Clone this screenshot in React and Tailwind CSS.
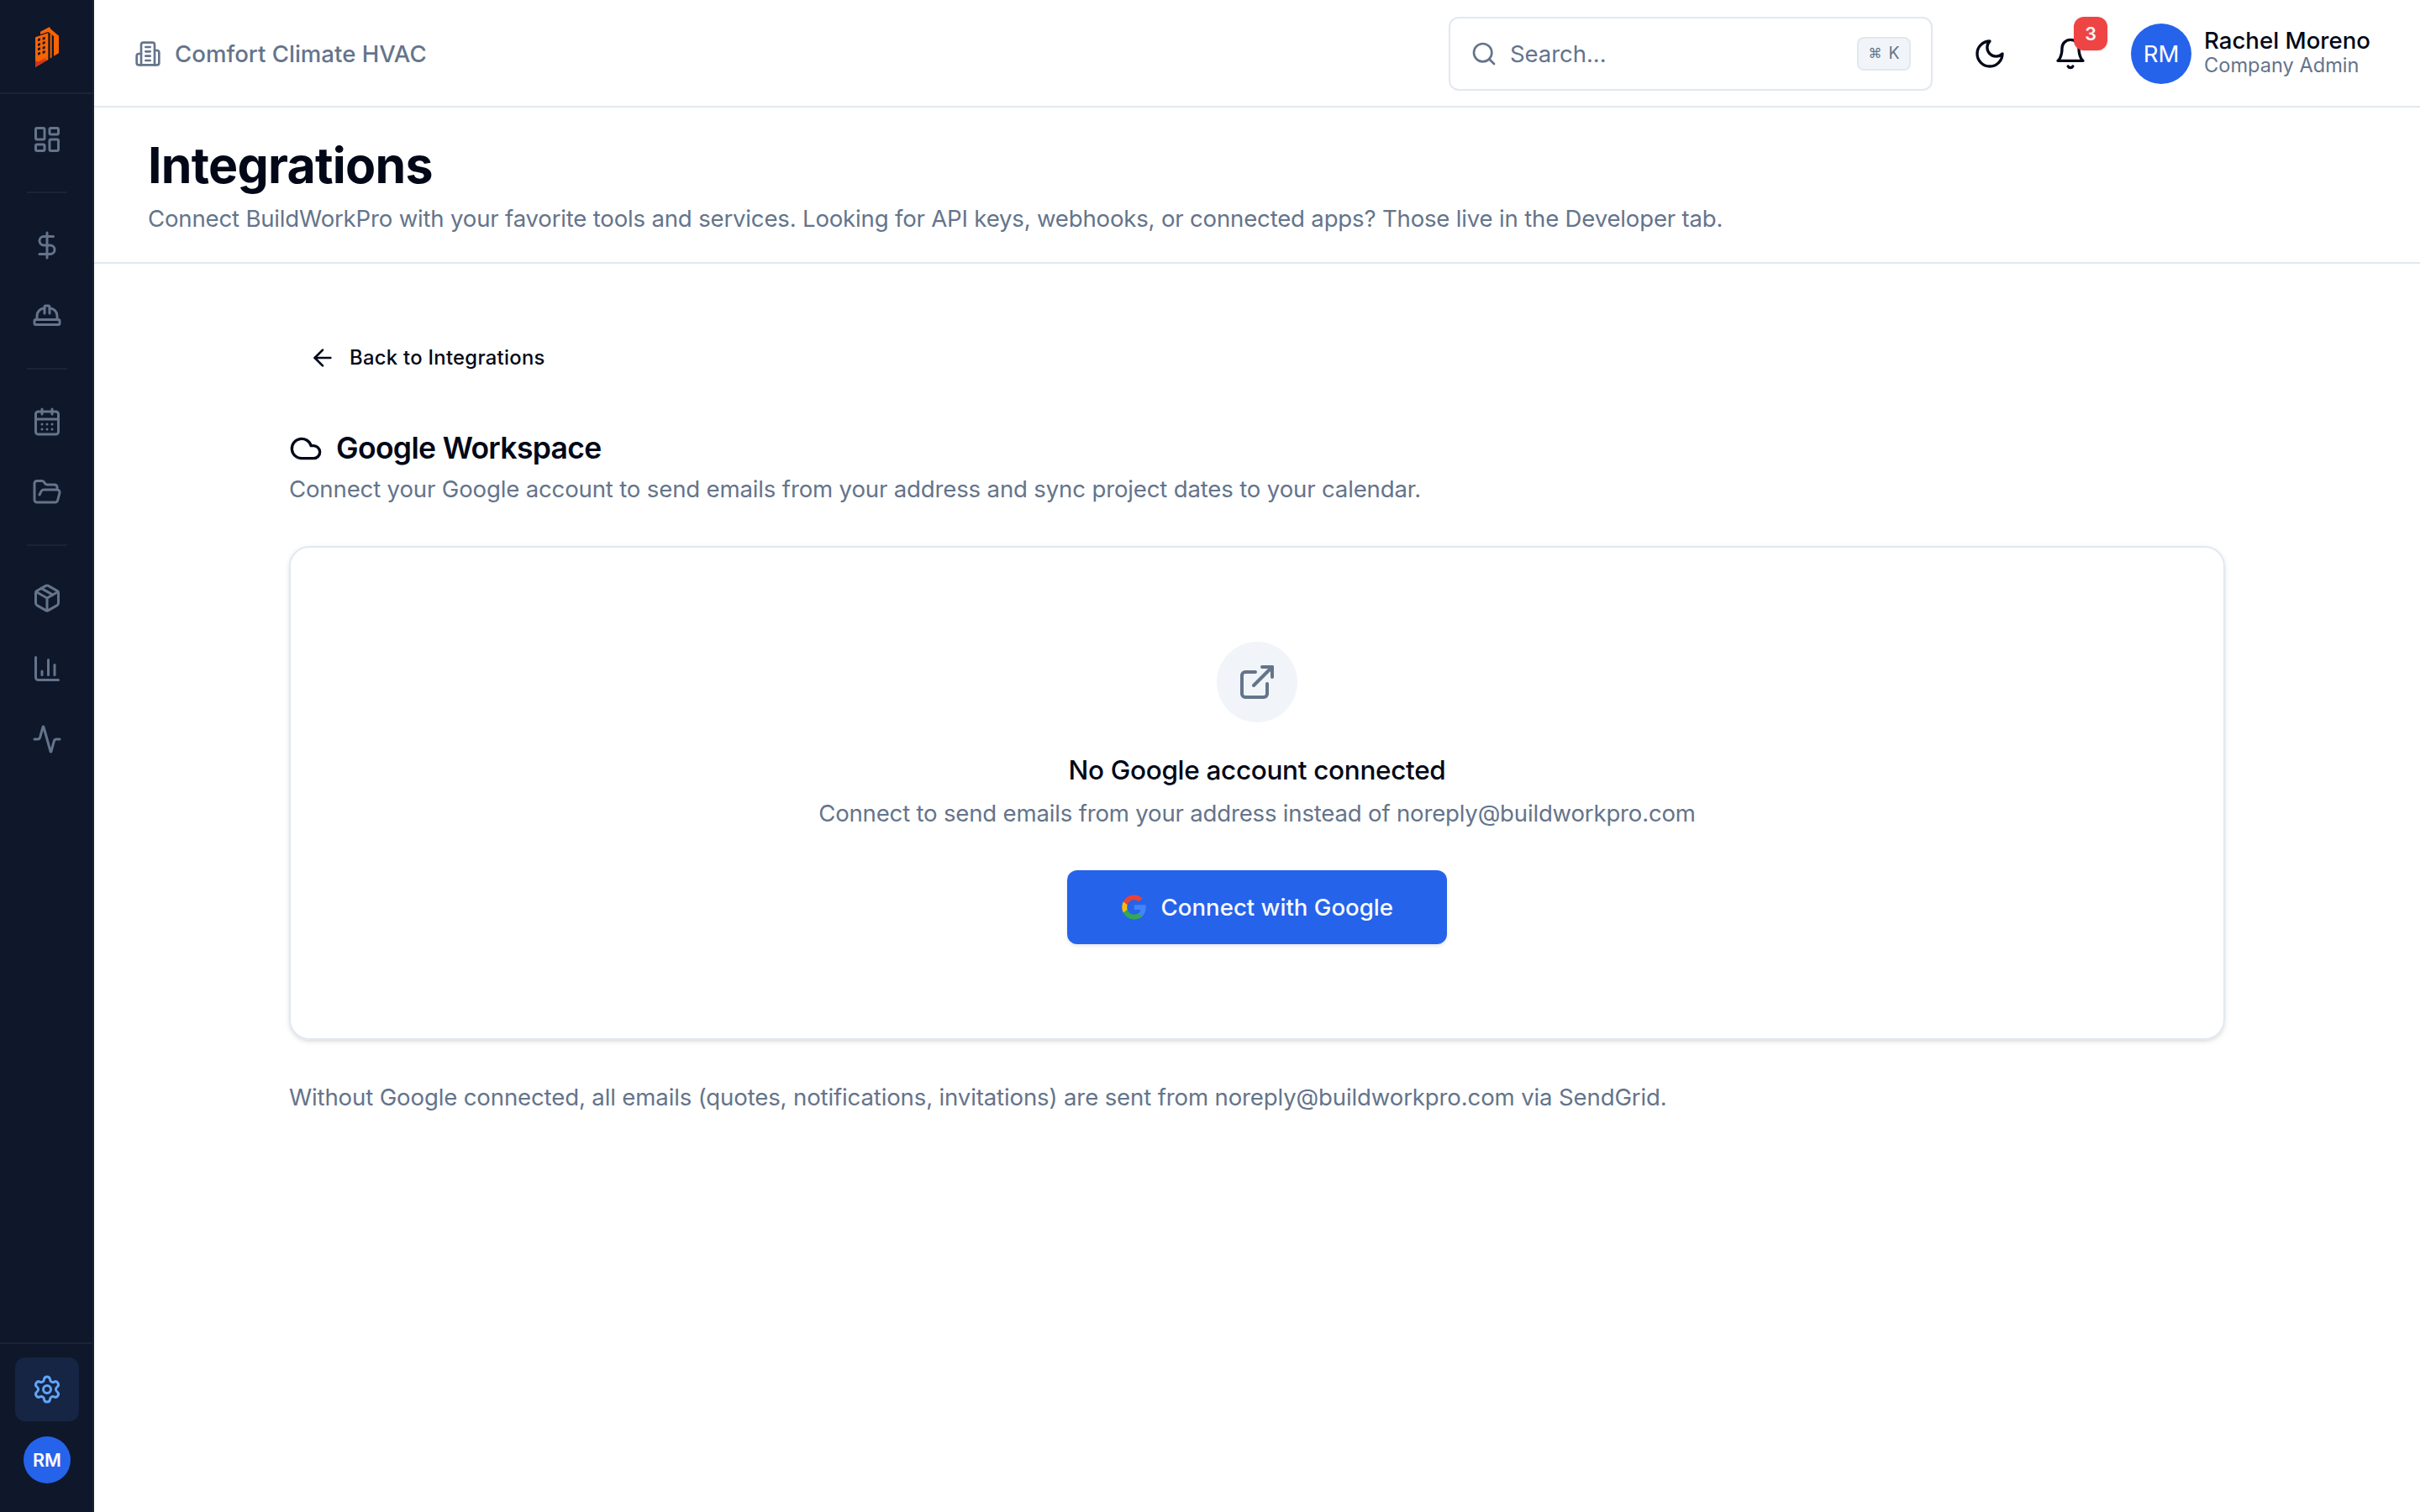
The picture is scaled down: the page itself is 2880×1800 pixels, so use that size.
import {
  Activity,
  ArrowLeft,
  CalendarDays,
  ChartColumn,
  Cloud,
  DollarSign,
  ExternalLink,
  FolderOpen,
  HardHat,
  LayoutDashboard,
  Package,
  Search,
  Settings,
} from "lucide-react";

function LineIcon({ className, children }) {
  return (
    <svg
      viewBox="0 0 24 24"
      fill="none"
      stroke="currentColor"
      strokeWidth="2"
      strokeLinecap="round"
      strokeLinejoin="round"
      className={className}
    >
      {children}
    </svg>
  );
}

function BuildingIcon({ className }) {
  return (
    <LineIcon className={className}>
      <path d="M6 22V4a2 2 0 0 1 2-2h8a2 2 0 0 1 2 2v18Z" />
      <path d="M6 12H4a2 2 0 0 0-2 2v6a2 2 0 0 0 2 2h2" />
      <path d="M18 9h2a2 2 0 0 1 2 2v9a2 2 0 0 1-2 2h-2" />
      <path d="M10 6h4" />
      <path d="M10 10h4" />
      <path d="M10 14h4" />
      <path d="M10 18h4" />
    </LineIcon>
  );
}

function MoonIcon({ className }) {
  return (
    <LineIcon className={className}>
      <path d="M12 3a6 6 0 0 0 9 9 9 9 0 1 1-9-9Z" />
    </LineIcon>
  );
}

function BellIcon({ className }) {
  return (
    <LineIcon className={className}>
      <path d="M6 8a6 6 0 0 1 12 0c0 7 3 9 3 9H3s3-2 3-9" />
      <path d="M10.3 21a1.94 1.94 0 0 0 3.4 0" />
    </LineIcon>
  );
}

function BrandMark() {
  return (
    <svg viewBox="126 96 84 144" className="h-12 w-7">
      <path
        fill="#f96302"
        d="M144 113 177 96l3 7 30 25v62l-18 10v-71l-20-15-28 9Z"
      />
      <path fill="#f96302" d="m179 120 6 4v81l-6 4Z" />
      <path
        fill="#f96302"
        fillRule="evenodd"
        d="M126 133 172 118v95l-46 27Zm9 6v9l9-3v-9Zm17-5v9l9-3v-9Zm-17 22v9l9-3v-9Zm17-6v9l9-3v-9Zm-17 22v9l9-3v-9Zm17-5v9l9-3v-9Zm-17 21v9l9-3v-9Zm17-5v9l9-3v-9Z"
      />
      <path fill="#c8371b" d="m126 217 12 4 8-7 4 4 4-12 3 10 6-11 2 12-39 23Z" />
    </svg>
  );
}

function GoogleIcon() {
  return (
    <svg viewBox="0 0 24 24" className="size-8">
      <path fill="#4285F4" d="M22.56 12.25c0-.78-.07-1.53-.2-2.25H12v4.26h5.92c-.26 1.37-1.04 2.53-2.21 3.31v2.77h3.57c2.08-1.92 3.28-4.74 3.28-8.09z" />
      <path fill="#34A853" d="M12 23c2.97 0 5.46-.98 7.28-2.66l-3.57-2.77c-.98.66-2.23 1.06-3.71 1.06-2.86 0-5.29-1.93-6.16-4.53H2.18v2.84C3.99 20.53 7.7 23 12 23z" />
      <path fill="#FBBC05" d="M5.84 14.09c-.22-.66-.35-1.36-.35-2.09s.13-1.43.35-2.09V7.07H2.18C1.43 8.55 1 10.22 1 12s.43 3.45 1.18 4.93l2.85-2.22.81-.62z" />
      <path fill="#EA4335" d="M12 5.38c1.62 0 3.06.56 4.21 1.64l3.15-3.15C17.45 2.09 14.97 1 12 1 7.7 1 3.99 3.47 2.18 7.07l3.66 2.84c.87-2.6 3.3-4.53 6.16-4.53z" />
    </svg>
  );
}

const NAV_GROUPS = [
  [LayoutDashboard],
  [DollarSign, HardHat],
  [CalendarDays, FolderOpen],
  [Package, ChartColumn, Activity],
];

function Sidebar() {
  return (
    <aside className="flex w-28 shrink-0 flex-col border-r-2 border-[#1a2435] bg-[#0f172a] text-[#64748b]">
      <div className="flex h-28 items-center justify-center border-b-2 border-[#1a2435] pl-0.5 pt-0.5">
        <BrandMark />
      </div>
      <nav className="flex flex-1 flex-col items-center pl-0.5 pt-4">
        {NAV_GROUPS.map((group, i) => (
          <div key={i} className="flex flex-col items-center">
            {i > 0 && <div className="mb-6 mt-6 h-0.5 w-12 bg-[#1a2435]" />}
            <div className="flex flex-col gap-2">
              {group.map((Icon, j) => (
                <a key={j} className="flex size-[76px] items-center justify-center">
                  <Icon className="size-9" strokeWidth={2} />
                </a>
              ))}
            </div>
          </div>
        ))}
      </nav>
      <div className="flex h-[202px] flex-col items-center border-t-2 border-[#1a2435] pl-0.5 pt-4">
        <a className="flex size-[76px] items-center justify-center rounded-xl bg-[#162544] text-[#60a5fa]">
          <Settings className="size-9" strokeWidth={2} />
        </a>
        <div className="mt-[18px] flex size-14 items-center justify-center rounded-full bg-[#2563eb] text-[21.5px] font-semibold text-white">
          RM
        </div>
      </div>
    </aside>
  );
}

function TopBar() {
  return (
    <header className="flex h-32 items-center border-b-2 border-[#e2e8f0] pl-12 pr-[60px] pt-0.5">
      <div className="flex items-center gap-4 text-[#64748b]">
        <BuildingIcon className="size-8" />
        <span className="text-[27.6px] font-medium leading-10">Comfort Climate HVAC</span>
      </div>
      <div className="ml-auto flex h-[88px] w-[576px] items-center rounded-xl border-2 border-[#e2e8f0] px-6 text-[#64748b]">
        <Search className="size-8" />
        <span className="ml-[15px] text-[27.6px] leading-10 tracking-[-0.1px]">Search...</span>
        <kbd className="ml-auto flex h-10 w-16 items-center justify-center gap-2 rounded-lg border-2 border-[#e2e8f0] bg-[#f1f5f9] font-[Inter] text-[19.5px] leading-none">
          <span className="font-['DejaVu_Sans'] text-base leading-none">⌘</span>K
        </kbd>
      </div>
      <button className="ml-7 flex size-20 items-center justify-center">
        <MoonIcon className="size-10" />
      </button>
      <button className="relative ml-4 flex size-20 items-center justify-center">
        <BellIcon className="size-10" />
        <span className="absolute -right-1 -top-1 flex size-10 items-center justify-center rounded-xl bg-[#ef4444] text-[21.5px] font-semibold text-[#f8fafc] shadow-sm">
          3
        </span>
      </button>
      <div className="ml-8 flex size-[72px] items-center justify-center rounded-full bg-[#2563eb] text-[27.6px] leading-10 text-white">
        RM
      </div>
      <div className="ml-[15px] flex w-[197px] flex-col whitespace-nowrap">
        <span className="text-[27.6px] font-medium leading-7">Rachel Moreno</span>
        <span className="text-[23.6px] leading-8 text-[#64748b]">Company Admin</span>
      </div>
    </header>
  );
}

export default function App() {
  return (
    <div className="flex h-[1800px] w-[2880px] overflow-hidden bg-white font-[Inter,sans-serif] text-[#020817]">
      <Sidebar />
      <div className="flex flex-1 flex-col">
        <TopBar />
        <div className="h-[186px] border-b-2 border-[#e2e8f0] px-16 pt-[33px]">
          <h1 className="text-[59px] font-bold leading-[72px] tracking-[-0.75px]">Integrations</h1>
          <p className="mt-[7px] text-[27.6px] leading-10 tracking-[-0.195px] text-[#64748b]">
            Connect BuildWorkPro with your favorite tools and services. Looking for API keys, webhooks, or connected apps?
            Those live in the Developer tab.
          </p>
        </div>
        <main className="mx-auto flex w-[2304px] flex-col pt-20">
          <button className="flex h-16 items-center gap-4 self-start px-6">
            <ArrowLeft className="size-8" />
            <span className="text-[23.8px] font-medium tracking-[0.3px]">Back to Integrations</span>
          </button>
          <h2 className="mt-12 flex h-14 items-center gap-4 text-[35.5px] font-semibold tracking-[-0.66px]">
            <Cloud className="size-10" />
            <span className="pb-px">Google Workspace</span>
          </h2>
          <p className="text-[27.6px] leading-10 tracking-[-0.17px] text-[#64748b]">
            Connect your Google account to send emails from your address and sync project dates to your calendar.
          </p>
          <section className="mt-12 flex h-[588px] flex-col items-center rounded-3xl border-2 border-[#e2e8f0] pt-28 shadow-[0_2px_6px_rgba(0,0,0,0.1),0_2px_4px_-2px_rgba(0,0,0,0.1)]">
            <div className="flex size-24 items-center justify-center rounded-full bg-[#f1f5f9] text-[#64748b]">
              <ExternalLink className="size-12" />
            </div>
            <h3 className="mt-[33px] text-[31.5px] font-medium leading-[48px] tracking-[-0.32px]">
              No Google account connected
            </h3>
            <p className="mt-[7px] text-[27.6px] leading-10 tracking-[-0.2px] text-[#64748b]">
              Connect to send emails from your address instead of noreply@buildworkpro.com
            </p>
            <button className="mt-12 flex h-[88px] w-[452px] items-center gap-4 rounded-xl bg-[#2563eb] px-16 text-[27.6px] font-medium leading-10 text-[#f8fafc] shadow-[0_2px_4px_rgba(0,0,0,0.1)]">
              <GoogleIcon />
              <span className="whitespace-nowrap">Connect with Google</span>
            </button>
          </section>
          <p className="mt-12 text-[27.6px] leading-10 tracking-[-0.15px] text-[#64748b]">
            Without Google connected, all emails (quotes, notifications, invitations) are sent from
            noreply@buildworkpro.com via SendGrid.
          </p>
        </main>
      </div>
    </div>
  );
}
